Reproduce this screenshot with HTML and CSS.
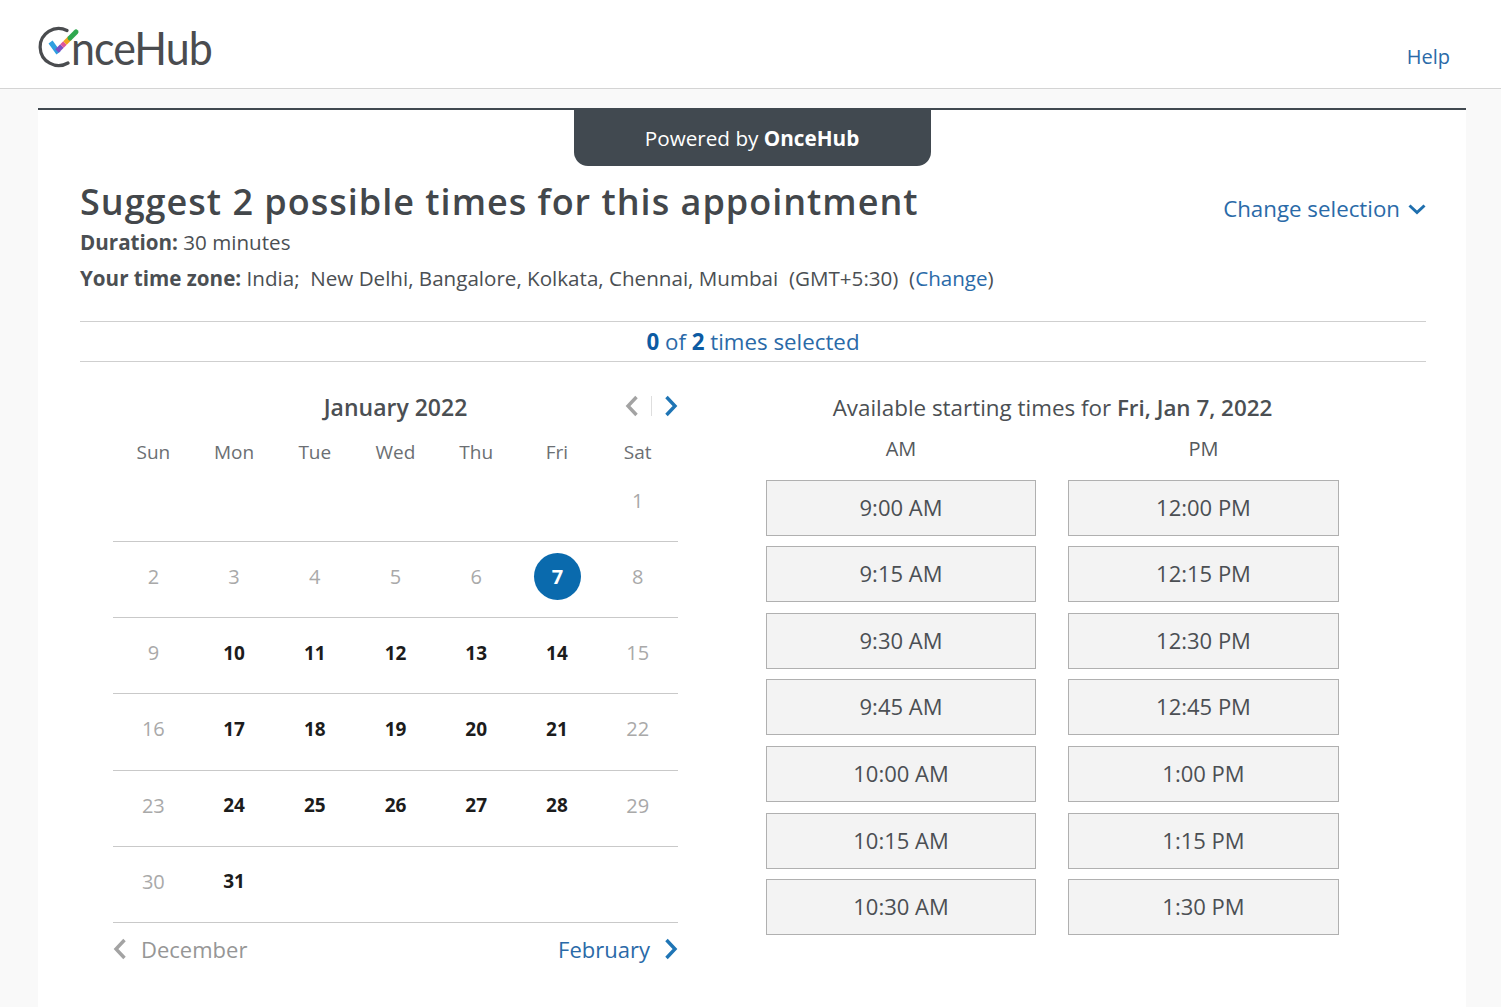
FILE: index.html
```html
<!DOCTYPE html>
<html>
<head>
  <title>OnceHub</title>
  <meta charset="UTF-8">
  <link rel="stylesheet" href="styles.css">
</head>
<body>
  <div class="header">
    <div class="logo">
      <svg class="logo-mark" width="46" height="46" viewBox="0 0 46 46">
        <path d="M30 6.500A18.500 18.500 0 1 0 31 39" fill="none" stroke="#4a4c4f" stroke-width="3.200" stroke-linecap="round"/>
        <path d="M15 20l5 7" fill="none" stroke="#2f9fe0" stroke-width="5" stroke-linecap="square"/>
        <path d="M20 27l5-5" fill="none" stroke="#7b4fc4" stroke-width="5"/>
        <path d="M25 22l3-3" fill="none" stroke="#e0559a" stroke-width="5"/>
        <path d="M28 19l5-5" fill="none" stroke="#f0a51e" stroke-width="5"/>
        <path d="M33 14l6-6" fill="none" stroke="#2fa84f" stroke-width="5" stroke-linecap="round"/>
      </svg>
      <span class="logo-text">nceHub</span>
    </div>
    <a class="help">Help</a>
  </div>

  <div class="page">
    <div class="card">
      <div class="powered">Powered by <b>OnceHub</b></div>

      <div class="intro">
        <div class="intro-text">
          <h1>Suggest 2 possible times for this appointment</h1>
          <div class="meta duration"><b>Duration:</b> 30 minutes</div>
          <div class="meta"><b>Your time zone:</b> India;&nbsp; New Delhi, Bangalore, Kolkata, Chennai, Mumbai&nbsp; (GMT+5:30)&nbsp; (<a>Change</a>)</div>
        </div>
        <a class="change-selection">Change selection
          <svg width="18" height="12" viewBox="0 0 18 12"><path d="M1.500 2.500L9 9.500l7.500-7" fill="none" stroke="#1f6fae" stroke-width="3"/></svg>
        </a>
      </div>

      <div class="counter"><b>0</b> <span class="of">of</span> <b>2</b> times selected</div>

      <div class="main">
        <div class="calendar">
          <div class="cal-head">
            <div class="cal-title">January 2022</div>
            <div class="cal-arrows">
              <svg width="14" height="22" viewBox="0 0 14 22"><path d="M11.500 2L3 11l8.500 9" fill="none" stroke="#a3a3a3" stroke-width="3.400"/></svg>
              <span class="cal-sep"></span>
              <svg width="14" height="22" viewBox="0 0 14 22"><path d="M2.500 2L11 11l-8.500 9" fill="none" stroke="#1f75b5" stroke-width="3.400"/></svg>
            </div>
          </div>
          <div class="week days">
            <div>Sun</div><div>Mon</div><div>Tue</div><div>Wed</div><div>Thu</div><div>Fri</div><div>Sat</div>
          </div>
          <div class="week first">
            <div></div><div></div><div></div><div></div><div></div><div></div><div class="off">1</div>
          </div>
          <div class="week">
            <div class="off">2</div><div class="off">3</div><div class="off">4</div><div class="off">5</div><div class="off">6</div><div><span class="selected">7</span></div><div class="off">8</div>
          </div>
          <div class="week">
            <div class="off">9</div><div class="on">10</div><div class="on">11</div><div class="on">12</div><div class="on">13</div><div class="on">14</div><div class="off">15</div>
          </div>
          <div class="week">
            <div class="off">16</div><div class="on">17</div><div class="on">18</div><div class="on">19</div><div class="on">20</div><div class="on">21</div><div class="off">22</div>
          </div>
          <div class="week">
            <div class="off">23</div><div class="on">24</div><div class="on">25</div><div class="on">26</div><div class="on">27</div><div class="on">28</div><div class="off">29</div>
          </div>
          <div class="week">
            <div class="off">30</div><div class="on">31</div><div></div><div></div><div></div><div></div><div></div>
          </div>
          <div class="cal-foot">
            <a class="prev-month">
              <svg width="14" height="22" viewBox="0 0 14 22"><path d="M11.500 2L3 11l8.500 9" fill="none" stroke="#a3a3a3" stroke-width="3.400"/></svg>
              December
            </a>
            <a class="next-month">
              February
              <svg width="14" height="22" viewBox="0 0 14 22"><path d="M2.500 2L11 11l-8.500 9" fill="none" stroke="#1f75b5" stroke-width="3.400"/></svg>
            </a>
          </div>
        </div>

        <div class="times">
          <div class="times-title">Available starting times for <b>Fri, Jan 7, 2022</b></div>
          <div class="times-grid">
            <div class="col-label">AM</div><div class="col-label">PM</div>
            <button class="slot">9:00 AM</button><button class="slot">12:00 PM</button>
            <button class="slot">9:15 AM</button><button class="slot">12:15 PM</button>
            <button class="slot">9:30 AM</button><button class="slot">12:30 PM</button>
            <button class="slot">9:45 AM</button><button class="slot">12:45 PM</button>
            <button class="slot">10:00 AM</button><button class="slot">1:00 PM</button>
            <button class="slot">10:15 AM</button><button class="slot">1:15 PM</button>
            <button class="slot">10:30 AM</button><button class="slot">1:30 PM</button>
          </div>
        </div>
      </div>
    </div>
  </div>
</body>
</html>
```

FILE: styles.css
```css
* {
  margin: 0;
  padding: 0;
  box-sizing: border-box;
}

body {
  font-family: "Open Sans", sans-serif;
  background: #f9f9f9;
  color: #4b4f53;
  overflow: hidden;
}

a {
  color: #2a6aa8;
}

.header {
  height: 89px;
  background: #fff;
  border-bottom: 1px solid #d4d4d4;
  display: flex;
  justify-content: space-between;
  padding: 24px 51px 0 37px;
}

.logo {
  display: flex;
  align-items: flex-start;
  height: 46px;
}

.logo-text {
  font-family: Lato, sans-serif;
  font-size: 46px;
  line-height: 48px;
  color: #4a4c4f;
  margin-left: -12px;
  letter-spacing: -1px;
  transform: scaleX(0.934);
  transform-origin: left;
}

.help {
  font-size: 20px;
  margin-top: 19px;
}

.page {
  padding: 19px 35px 0 38px;
}

.card {
  background: #fff;
  border-top: 2px solid #414950;
  height: 900px;
  padding: 0 40px 0 42px;
}

.powered {
  width: 357px;
  height: 56px;
  margin: 0 auto;
  position: relative;
  left: -1px;
  background: #414950;
  color: #fff;
  border-radius: 0 0 14px 14px;
  font-size: 20.700px;
  line-height: 56px;
  text-align: center;
}

.intro {
  display: flex;
  justify-content: space-between;
  align-items: flex-start;
  margin-top: 12px;
  height: 143px;
}

h1 {
  font-size: 36px;
  font-weight: 600;
  line-height: 48px;
  color: #43474b;
  letter-spacing: 1px;
}

.meta {
  font-size: 20.600px;
  line-height: 28px;
  margin-bottom: 8px;
}

.meta.duration {
  margin-top: 2px;
}

.meta b {
  font-weight: 700;
}

.change-selection {
  font-size: 22.300px;
  margin-top: 15px;
  display: flex;
  align-items: center;
  gap: 8px;
}

.counter {
  height: 41px;
  border-top: 1px solid #cfcfcf;
  border-bottom: 1px solid #cfcfcf;
  text-align: center;
  font-size: 22.300px;
  line-height: 39px;
  color: #2a6aa8;
}

.counter b {
  color: #0c5ba3;
}

.main {
  display: flex;
  padding: 23px 0 0 33px;
}

.calendar {
  width: 565px;
}

.cal-head {
  position: relative;
  height: 47px;
  text-align: center;
}

.cal-title {
  font-size: 23px;
  font-weight: 600;
  line-height: 44px;
  color: #4b4f53;
}

.cal-arrows {
  position: absolute;
  right: 0;
  top: 10px;
  display: flex;
  align-items: center;
  gap: 12px;
}

.cal-sep {
  width: 1px;
  height: 20px;
  background: #dedede;
}

.week {
  display: grid;
  grid-template-columns: repeat(7, 1fr);
  height: 76.200px;
  padding-bottom: 6px;
  border-bottom: 1px solid #c9c9c9;
  align-items: center;
  text-align: center;
  font-size: 20px;
}

.week.days {
  height: 40px;
  padding-bottom: 0;
  border-bottom: 0;
  font-size: 19px;
  color: #6b6f73;
}

.week.first {
  height: 70px;
  align-items: flex-start;
  padding-top: 15px;
}

.off {
  color: #a9a9a9;
}

.on {
  font-weight: 700;
  font-size: 19px;
  color: #1c1c1c;
}

.selected {
  display: inline-block;
  width: 47px;
  height: 47px;
  border-radius: 50%;
  background: #0a6aad;
  color: #fff;
  font-weight: 700;
  line-height: 47px;
  vertical-align: middle;
  position: relative;
  left: 0.500px;
}

.cal-foot {
  display: flex;
  justify-content: space-between;
  padding-top: 11px;
  font-size: 22px;
}

.cal-foot a {
  display: flex;
  align-items: center;
  gap: 14px;
}

.prev-month {
  color: #969696;
}

.times {
  margin-left: 88px;
  width: 573px;
  padding-top: 1px;
}

.times-title {
  font-size: 22.400px;
  line-height: 44px;
  text-align: center;
  color: #4b4f53;
}

.times-title b {
  font-weight: 600;
}

.times-grid {
  display: grid;
  grid-template-columns: 270px 271px;
  column-gap: 32px;
  row-gap: 10.600px;
  margin-top: 5px;
}

.col-label {
  font-size: 20px;
  line-height: 28px;
  text-align: center;
  padding-bottom: 6px;
  color: #55595d;
}

.slot {
  height: 56px;
  padding-bottom: 2px;
  background: #f3f3f3;
  border: 1px solid #b0b0b0;
  font-family: inherit;
  font-size: 22px;
  color: #4b4f53;
}
```
